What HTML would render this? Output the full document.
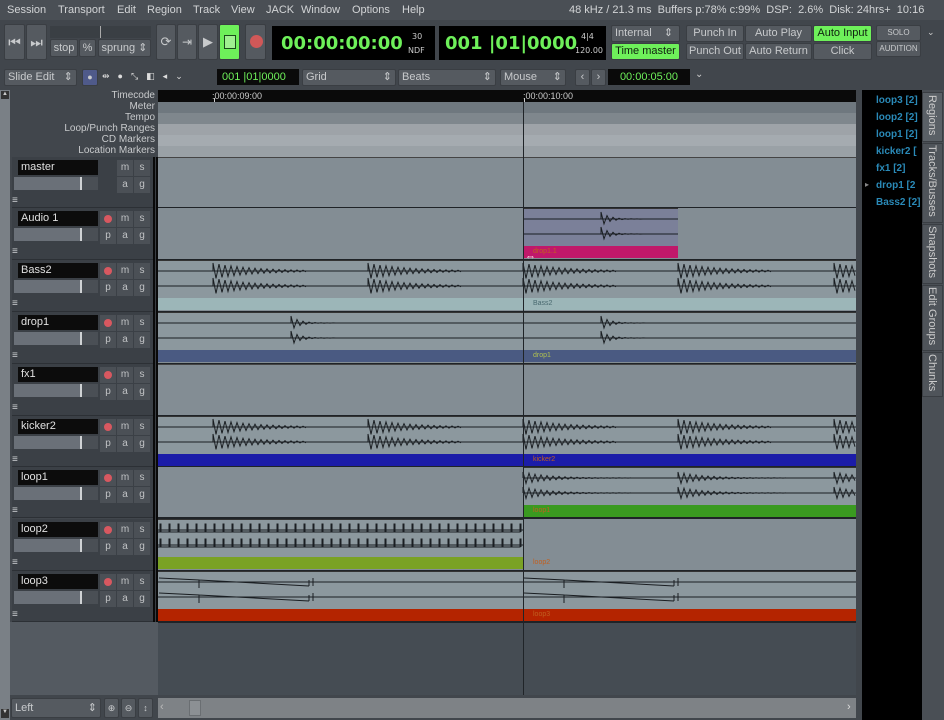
<!DOCTYPE html>
<html><head><meta charset="utf-8"><style>
*{margin:0;padding:0;box-sizing:border-box}
body{width:944px;height:720px;background:#41464c;font-family:"Liberation Sans","DejaVu Sans",sans-serif;font-size:11px;color:#d8d8d8;position:relative;overflow:hidden}
.a{position:absolute}
.menu{left:0;top:0;width:944px;height:20px;background:#4a4f55;color:#d2d4d6;font-size:11px}
.menu span{position:absolute;top:4px}
.btn{position:absolute;background:#555a60;border:1px solid #3a3e43;border-radius:2px;color:#c8cacc;text-align:center;font-size:11px}
.grn{background:#6ef05a;color:#102010}
.clock{position:absolute;background:#000;color:#6ef05a;font-family:"DejaVu Sans",sans-serif;font-weight:bold}
.hdr{position:absolute;left:12px;width:141px;background:#3b4046;border-bottom:1px solid #2c3035}
.nm{position:absolute;left:6px;top:3px;width:80px;height:15px;background:#0c0c0c;color:#e0e0e0;font-size:11px;padding-left:3px;line-height:15px}
.fd{position:absolute;left:2px;top:20px;width:84px;height:13px;background:#6a7078}
.fd i{position:absolute;left:66px;top:0;width:2px;height:13px;background:#cfd2d4}
.fd b{position:absolute;left:68px;top:0;width:16px;height:13px;background:#4a4f55}
.sb{position:absolute;width:16px;height:16px;background:#4b5056;color:#c0c2c4;text-align:center;font-size:10px;line-height:15px}
.rec{position:absolute;width:8px;height:8px;border-radius:50%;background:#d85860;left:4px;top:4px}
.ham{position:absolute;left:0;top:40px;width:8px;font-size:10px;color:#cfd2d4;line-height:8px}
.trk{position:absolute;left:158px;width:698px;background:#838d94;border-bottom:2px solid #1f2327}
.lbl{position:absolute;font-size:7px}
.rl{position:absolute;right:0;width:147px;text-align:right;font-size:10px;color:#c8cacc;padding-right:3px}
</style></head><body>
<div class="a menu">
<span style="left:7px">Session</span><span style="left:58px">Transport</span><span style="left:117px">Edit</span><span style="left:147px">Region</span><span style="left:193px">Track</span><span style="left:231px">View</span><span style="left:266px">JACK</span><span style="left:301px">Window</span><span style="left:352px">Options</span><span style="left:402px">Help</span>
<span style="left:569px">48 kHz / 21.3 ms &nbsp;Buffers p:78% c:99% &nbsp;DSP: &nbsp;2.6% &nbsp;Disk: 24hrs+ &nbsp;10:16</span>
</div>
<div class="a" style="left:0;top:20px;width:944px;height:46px;background:#41464c"></div>
<div class="btn" style="left:4px;top:24px;width:21px;height:36px;font-size:14px;line-height:34px">⏮</div>
<div class="btn" style="left:26px;top:24px;width:21px;height:36px;font-size:14px;line-height:34px">⏭</div>
<div class="a" style="left:50px;top:26px;width:101px;height:12px;background:#3a3f44"></div>
<div class="a" style="left:100px;top:26px;width:1px;height:12px;background:#aaa"></div>
<div class="btn" style="left:50px;top:39px;width:28px;height:18px;line-height:16px">stop</div>
<div class="btn" style="left:79px;top:39px;width:17px;height:18px;line-height:16px">%</div>
<div class="btn" style="left:98px;top:39px;width:53px;height:18px;line-height:16px">sprung ⇕</div>
<div class="btn" style="left:156px;top:24px;width:20px;height:36px;font-size:13px;line-height:34px">⟳</div>
<div class="btn" style="left:177px;top:24px;width:20px;height:36px;font-size:12px;line-height:34px">⇥</div>
<div class="btn" style="left:198px;top:24px;width:20px;height:36px;font-size:13px;line-height:34px">▶</div>
<div class="btn grn" style="left:219px;top:24px;width:21px;height:36px"><div class="a" style="left:4px;top:10px;width:12px;height:14px;border:1px solid #1a4a1a;background:#9ff090"></div></div>
<div class="btn" style="left:245px;top:24px;width:21px;height:36px"><div class="a" style="left:4px;top:10px;width:13px;height:13px;border-radius:50%;background:#d05858"></div></div>
<div class="clock" style="left:272px;top:26px;width:163px;height:34px"><span class="a" style="left:9px;top:7px;font-size:18px">00:00:00:00</span><span class="a" style="left:140px;top:6px;font-size:8px;color:#ccc;font-weight:normal">30</span><span class="a" style="left:136px;top:20px;font-size:8px;color:#ccc;font-weight:normal">NDF</span></div>
<div class="clock" style="left:439px;top:26px;width:167px;height:34px"><span class="a" style="left:6px;top:7px;font-size:18px">001 |01|0000</span><span class="a" style="left:142px;top:6px;font-size:8px;color:#ccc;font-weight:normal">4|4</span><span class="a" style="left:136px;top:20px;font-size:8px;color:#ccc;font-weight:normal">120.00</span></div>
<div class="btn" style="left:611px;top:25px;width:69px;height:17px;line-height:15px;text-align:left;padding-left:3px">Internal &nbsp;&nbsp;&nbsp;⇕</div>
<div class="btn grn" style="left:611px;top:43px;width:69px;height:17px;line-height:15px">Time master</div>
<div class="btn" style="left:686px;top:25px;width:58px;height:17px;line-height:15px">Punch In</div>
<div class="btn" style="left:686px;top:43px;width:58px;height:17px;line-height:15px">Punch Out</div>
<div class="btn" style="left:745px;top:25px;width:67px;height:17px;line-height:15px">Auto Play</div>
<div class="btn" style="left:745px;top:43px;width:67px;height:17px;line-height:15px">Auto Return</div>
<div class="btn grn" style="left:813px;top:25px;width:59px;height:17px;line-height:15px">Auto Input</div>
<div class="btn" style="left:813px;top:43px;width:59px;height:17px;line-height:15px">Click</div>
<div class="btn" style="left:876px;top:25px;width:45px;height:16px;line-height:14px;font-size:8px">SOLO</div>
<div class="btn" style="left:876px;top:41px;width:45px;height:16px;line-height:14px;font-size:8px">AUDITION</div>
<div class="a" style="left:927px;top:27px;font-size:9px;color:#ccc">⌄</div>
<div class="a" style="left:0;top:66px;width:944px;height:24px;background:#41464c"></div>
<div class="btn" style="left:4px;top:69px;width:73px;height:17px;line-height:15px;text-align:left;padding-left:3px">Slide Edit &nbsp;&nbsp;⇕</div>
<div class="btn" style="left:82px;top:69px;width:16px;height:17px;background:#4f5a8a;line-height:15px;font-size:9px">●</div>
<div class="a" style="left:102px;top:71px;font-size:9px;color:#ddd;letter-spacing:8px">⇹●⤡◧◂⌄</div>
<div class="a" style="left:217px;top:69px;width:82px;height:16px;background:#0a0a0a;color:#6ef05a;font-size:11px;line-height:16px;padding-left:5px">001 |01|0000</div>
<div class="btn" style="left:302px;top:69px;width:94px;height:17px;line-height:15px;text-align:left;padding-left:3px">Grid<span style="float:right;padding-right:3px">⇕</span></div>
<div class="btn" style="left:398px;top:69px;width:98px;height:17px;line-height:15px;text-align:left;padding-left:3px">Beats<span style="float:right;padding-right:3px">⇕</span></div>
<div class="btn" style="left:500px;top:69px;width:66px;height:17px;line-height:15px;text-align:left;padding-left:3px">Mouse<span style="float:right;padding-right:3px">⇕</span></div>
<div class="btn" style="left:575px;top:69px;width:15px;height:17px;line-height:15px">‹</div>
<div class="btn" style="left:591px;top:69px;width:15px;height:17px;line-height:15px">›</div>
<div class="a" style="left:608px;top:69px;width:82px;height:16px;background:#0a0a0a;color:#6ef05a;font-size:11px;line-height:16px;text-align:center">00:00:05:00</div>
<div class="a" style="left:695px;top:69px;font-size:10px;color:#ccc">⌄</div>
<div class="a" style="left:0;top:90px;width:10px;height:630px;background:#7a8086"></div>
<div class="a" style="left:1px;top:91px;width:8px;height:8px;background:#333;color:#ccc;font-size:6px;text-align:center">▲</div>
<div class="a" style="left:1px;top:709px;width:8px;height:9px;background:#333;color:#ccc;font-size:6px;text-align:center">▼</div>
<div class="a" style="left:10px;top:90px;width:148px;height:67px;background:#41464c">
<div class="rl" style="top:0">Timecode</div><div class="rl" style="top:11px">Meter</div><div class="rl" style="top:22px">Tempo</div><div class="rl" style="top:33px">Loop/Punch Ranges</div><div class="rl" style="top:44px">CD Markers</div><div class="rl" style="top:55px">Location Markers</div>
</div>
<div class="a" style="left:153px;top:157px;width:5px;height:465px;background:#0a0a0a"></div>
<div class="a" style="left:155px;top:157px;width:1px;height:465px;background:#3a3e43"></div>
<div class="a" style="left:158px;top:90px;width:698px;height:12px;background:#0a0a0a;color:#ccc;font-size:9px"><span class="a" style="left:54px;top:1px">:00:00:09:00</span><span class="a" style="left:365px;top:1px">:00:00:10:00</span><div class="a" style="left:56px;top:8px;width:1px;height:4px;background:#ccc"></div><div class="a" style="left:366px;top:8px;width:1px;height:4px;background:#ccc"></div></div>
<div class="a" style="left:158px;top:102px;width:698px;height:11px;background:#6f787f"></div>
<div class="a" style="left:158px;top:113px;width:698px;height:11px;background:#7f878d"></div>
<div class="a" style="left:158px;top:124px;width:698px;height:11px;background:#9ea3a8"></div>
<div class="a" style="left:158px;top:135px;width:698px;height:11px;background:#a5abb0"></div>
<div class="a" style="left:158px;top:146px;width:698px;height:11px;background:#9aa1a6"></div>
<div class="a" style="left:10px;top:622px;width:148px;height:73px;background:#545a61"></div>
<div class="a" style="left:158px;top:622px;width:698px;height:73px;background:#454c53"></div>
<div id="tracks"></div>
<div class="a" style="left:523px;top:102px;width:1px;height:593px;background:#202428"></div>
<div class="a" style="left:525px;top:251px;color:#fff;font-size:11px;font-weight:bold">⇔</div>
<div class="a" style="left:856px;top:90px;width:6px;height:630px;background:#41464c"></div>
<div class="a" style="left:862px;top:90px;width:60px;height:630px;background:#000"></div>
<div class="a" style="left:862px;top:90px;width:82px;height:630px;font-size:10px;font-weight:bold;color:#2a8ab8">
<div class="a" style="left:14px;top:5px">loop3 [2]</div><div class="a" style="left:14px;top:22px">loop2 [2]</div><div class="a" style="left:14px;top:39px">loop1 [2]</div><div class="a" style="left:14px;top:56px">kicker2 [</div><div class="a" style="left:14px;top:73px">fx1 [2]</div><div class="a" style="left:3px;top:90px;color:#888;font-size:8px">▸</div><div class="a" style="left:14px;top:90px">drop1 [2</div><div class="a" style="left:14px;top:107px">Bass2 [2]</div>
</div>
<div class="a" style="left:922px;top:90px;width:22px;height:630px;background:#4a4f55"></div>
<div class="a" style="left:922px;top:92px;width:21px;height:50px;background:#5a6066;border:1px solid #3a3e43"></div>
<div class="a" style="left:922px;top:143px;width:21px;height:80px;background:#4f545a;border:1px solid #3a3e43"></div>
<div class="a" style="left:922px;top:224px;width:21px;height:60px;background:#4f545a;border:1px solid #3a3e43"></div>
<div class="a" style="left:922px;top:285px;width:21px;height:66px;background:#4f545a;border:1px solid #3a3e43"></div>
<div class="a" style="left:922px;top:352px;width:21px;height:45px;background:#4f545a;border:1px solid #3a3e43"></div>
<div class="a" style="left:926px;top:95px;writing-mode:vertical-rl;font-size:11px;color:#ccc">Regions</div>
<div class="a" style="left:926px;top:145px;writing-mode:vertical-rl;font-size:11px;color:#ccc">Tracks/Busses</div>
<div class="a" style="left:926px;top:226px;writing-mode:vertical-rl;font-size:11px;color:#ccc">Snapshots</div>
<div class="a" style="left:926px;top:287px;writing-mode:vertical-rl;font-size:11px;color:#ccc">Edit Groups</div>
<div class="a" style="left:926px;top:354px;writing-mode:vertical-rl;font-size:11px;color:#ccc">Chunks</div>
<div class="btn" style="left:11px;top:698px;width:90px;height:20px;line-height:18px;text-align:left;padding-left:3px">Left<span style="float:right;padding-right:3px">⇕</span></div>
<div class="btn" style="left:104px;top:698px;width:15px;height:20px;line-height:18px;font-size:9px">⊕</div>
<div class="btn" style="left:121px;top:698px;width:15px;height:20px;line-height:18px;font-size:9px">⊖</div>
<div class="btn" style="left:138px;top:698px;width:15px;height:20px;line-height:18px;font-size:9px">↕</div>
<div class="a" style="left:158px;top:698px;width:698px;height:20px;background:#7e8286"></div>
<div class="a" style="left:189px;top:700px;width:12px;height:16px;background:#8c9094;border:1px solid #6a6e72"></div>
<div class="a" style="left:160px;top:701px;color:#bbb;font-size:11px">‹</div>
<div class="a" style="left:847px;top:701px;color:#ddd;font-size:11px">›</div>
<script>
var T=[["master",157,null],["Audio 1",208,"#c0186a"],["Bass2",260,"#9cb6b8"],["drop1",312,"#4a5a82"],["fx1",364,null],["kicker2",416,"#1c1ca8"],["loop1",467,"#3a9a20"],["loop2",519,"#7aa224"],["loop3",571,"#b42400"]];
var h="";
function wave(x0,x1,yc,amp,len,dec){var p="M"+x0+" "+yc;var n=0;for(var x=x0;x<x1;x+=3){var t=(x-x0)/len;var a=amp*Math.exp(-t*dec);var y=yc+(n%2?a:-a);n++;p+=" L"+x.toFixed(1)+" "+y.toFixed(1);}return p;}
T.forEach(function(t,i){
 var y=t[1],H=(i==8?51:(y==208||y==260||y==312||y==364||y==519)?52:51);
 h+='<div class="hdr" style="top:'+y+'px;height:'+H+'px"><div class="nm">'+t[0]+'</div><div class="fd"><i></i><b></b></div>';
 if(i>0){h+='<div class="sb" style="left:88px;top:3px"><div class="rec"></div></div><div class="sb" style="left:88px;top:20px">p</div>';}
 h+='<div class="sb" style="left:105px;top:3px">m</div><div class="sb" style="left:122px;top:3px">s</div><div class="sb" style="left:105px;top:20px">a</div><div class="sb" style="left:122px;top:20px">g</div><div class="ham">≡</div></div>';
 h+='<div class="trk" style="top:'+y+'px;height:'+(H+1)+'px">';
 var rx0=0,rx1=698;
 if(i==1){rx0=365;rx1=520}else if(i==6){rx0=365}else if(i==7){rx1=365}
 if(t[2]){
  var wbg=i==1?"#7b8099":"#8c989e";
  h+='<div class="a" style="left:'+rx0+'px;top:0;width:'+(rx1-rx0)+'px;height:38px;background:'+wbg+'"></div>';
  h+='<div class="a" style="left:'+rx0+'px;top:38px;width:'+(rx1-rx0)+'px;height:12px;background:'+t[2]+'"><span class="lbl" style="left:'+(Math.max(365,rx0)-rx0+10)+'px;top:2px;color:'+(i==2?"#4a6a70":i==3?"#b0c050":"#c06020")+'">'+t[0].replace("Audio 1","drop1.1")+'</span></div>';
  h+='<div class="a" style="left:'+rx0+'px;top:0;width:'+(rx1-rx0)+'px;height:50px;border-top:1px solid #333"></div>';
  var svg='<svg class="a" style="left:0;top:0" width="698" height="38"><g fill="none" stroke="#1a1e22" stroke-width="1">';
  [11,26].forEach(function(yc){
   svg+='<line x1="'+rx0+'" y1="'+yc+'" x2="'+rx1+'" y2="'+yc+'"/>';
   var starts=[],len=110,dec=2,amp=8;
   if(i==1){starts=[443];len=25;dec=3;amp=7}
   if(i==2||i==5){starts=[55,210,365,520,676];len=100;dec=2.5}
   if(i==3){starts=[133,443];len=35;dec=4;amp=7}
   if(i==6){starts=[365,520,676];len=80;dec=3;amp=6}
   starts.forEach(function(s){svg+='<path d="'+wave(s,Math.min(s+(i==6?110:i==2||i==5?95:50),rx1),yc,amp,len,dec)+'"/>';});
   if(i==7){var p="M0 "+(yc+2);for(var x=2;x<365;x+=9){p+=" L"+x+" "+(yc+2)+" L"+x+" "+(yc-6)+" L"+(x+1)+" "+(yc-6)+" L"+(x+1)+" "+(yc+2);}svg+='<path d="'+p+'"/>';}
   if(i==8){[0,365].forEach(function(o){svg+='<path d="M'+(366+o-365)+' '+(yc-4)+' l40 2 l0 8 m0 -8 l110 6 m0 -6 l0 6 M'+(520+o-365)+' '+(yc-4)+' l0 8"/>';});svg+='<path d="M0 '+yc+' L365 '+yc+'"/>'}
  });
  svg+='</g></svg>';h+=svg;
 } else {
  h+='<div class="a" style="left:0;top:0;width:698px;height:50px;border-top:1px solid #444"></div>';
 }
 h+='</div>';
});
document.getElementById("tracks").outerHTML=h;
</script>
</body></html>
